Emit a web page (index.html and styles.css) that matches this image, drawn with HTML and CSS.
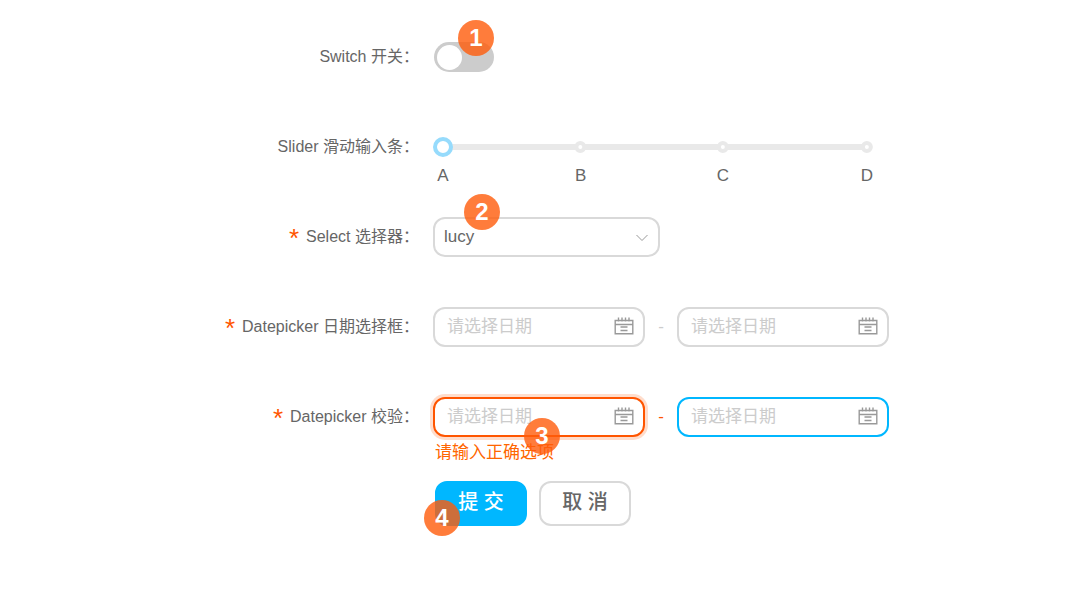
FILE: index.html
```html
<!DOCTYPE html>
<html lang="zh-CN">
<head>
  <meta charset="UTF-8" />
  <meta name="viewport" content="width=device-width, initial-scale=1" />
  <title>Form</title>
  <link rel="stylesheet" href="styles.css">
</head>
<body>
  <svg class="sprite" aria-hidden="true">
    <symbol id="icon-calendar" viewBox="0 0 20 18">
      <path d="M1.2 3.5h17.6v13.3H1.2zM1 7.5h18M4.5 .5v4M8 .5v4M11.5 .5v4M15 .5v4M6.5 10h7M6.5 13.5h7" />
    </symbol>
    <symbol id="icon-down" viewBox="0 0 12 8">
      <path d="M.5 1l5.5 5.5L11.5 1" />
    </symbol>
  </svg>

  <form class="form">
    <div class="form-item">
      <label class="form-label" for="switch">Switch 开关：</label>
      <div class="form-control">
        <div class="switch">
          <input type="checkbox" id="switch" role="switch" />
          <span class="badge badge-switch">1</span>
        </div>
      </div>
    </div>

    <div class="form-item">
      <label class="form-label" for="slider">Slider 滑动输入条：</label>
      <div class="form-control">
        <div class="slider">
          <div class="slider-rail">
            <span class="mark" style="left: 0%">A</span>
            <span class="mark mark-dot" style="left: 32.5%">B</span>
            <span class="mark mark-dot" style="left: 66%">C</span>
            <span class="mark mark-dot" style="left: 100%">D</span>
          </div>
          <input type="range" id="slider" min="0" max="100" value="0" />
        </div>
      </div>
    </div>

    <div class="form-item">
      <label class="form-label required" for="select">Select 选择器：</label>
      <div class="form-control">
        <div class="select">
          <select id="select">
            <option>lucy</option>
          </select>
          <svg class="icon-down"><use href="#icon-down" /></svg>
          <span class="badge badge-select">2</span>
        </div>
      </div>
    </div>

    <div class="form-item">
      <label class="form-label required" for="start">Datepicker 日期选择框：</label>
      <div class="form-control">
        <div class="date-range">
          <div class="date">
            <input type="text" id="start" placeholder="请选择日期" />
            <svg class="icon-calendar"><use href="#icon-calendar" /></svg>
          </div>
          <span class="split">-</span>
          <div class="date">
            <input type="text" aria-label="结束日期" placeholder="请选择日期" />
            <svg class="icon-calendar"><use href="#icon-calendar" /></svg>
          </div>
        </div>
      </div>
    </div>

    <div class="form-item form-item-error">
      <label class="form-label required" for="check">Datepicker 校验：</label>
      <div class="form-control">
        <div class="date-range">
          <div class="date date-error">
            <input type="text" id="check" placeholder="请选择日期" aria-describedby="check-error" />
            <svg class="icon-calendar"><use href="#icon-calendar" /></svg>
            <span class="badge badge-date">3</span>
          </div>
          <span class="split">-</span>
          <div class="date date-active">
            <input type="text" aria-label="结束日期" placeholder="请选择日期" />
            <svg class="icon-calendar"><use href="#icon-calendar" /></svg>
          </div>
        </div>
        <div class="error-text" id="check-error">请输入正确选项</div>
      </div>
    </div>

    <div class="form-item">
      <div class="form-control form-actions">
        <div class="submit">
          <button type="submit" class="btn btn-primary">提 交</button>
          <span class="badge badge-submit">4</span>
        </div>
        <button type="button" class="btn">取 消</button>
      </div>
    </div>
  </form>
</body>
</html>
```
FILE: styles.css
```css
*, *::before {
  box-sizing: border-box;
}

body {
  margin: 0;
  background: #fff;
  color: #666;
  font-family: "Liberation Sans", "Noto Sans CJK SC", sans-serif;
  font-size: 16px;
}

input, select, button {
  margin: 0;
  font: inherit;
  color: inherit;
  outline: none;
}

.sprite {
  position: absolute;
  width: 0;
  height: 0;
}

.form {
  padding: 37px 0 20px;
}

.form-item {
  display: grid;
  grid-template-columns: 39% 1fr;
  column-gap: 11px;
  min-height: 40px;
  margin-bottom: 50px;
}

.form-item-error {
  margin-bottom: 16px;
}

.form-label {
  height: 40px;
  padding-right: 3px;
  line-height: 40px;
  text-align: right;
}

.required::before {
  content: "*";
  display: inline-block;
  height: 40px;
  margin-right: 7px;
  color: #ff5500;
  font-size: 26px;
  line-height: 42px;
  vertical-align: top;
}

.form-control {
  grid-column: 2;
}

/* switch */
.switch {
  position: relative;
  width: 60px;
  height: 30px;
  margin: 5px 0 0 1px;
}

.switch input {
  appearance: none;
  display: flex;
  align-items: center;
  width: 60px;
  height: 30px;
  padding: 0 3px;
  border-radius: 15px;
  background: #ccc;
  cursor: pointer;
}

.switch input::before {
  content: "";
  width: 25px;
  height: 25px;
  border-radius: 50%;
  background: #fff;
}

.switch input:checked {
  justify-content: flex-end;
  background: #00b7ff;
}

/* slider */
.slider {
  position: relative;
  max-width: 444px;
  height: 40px;
}

.slider input {
  appearance: none;
  position: relative;
  display: block;
  width: 100%;
  height: 40px;
  background: transparent;
  cursor: pointer;
}

.slider input::-webkit-slider-thumb {
  appearance: none;
  box-sizing: border-box;
  width: 20px;
  height: 20px;
  border: 4px solid #96dbfc;
  border-radius: 50%;
  background: #fff;
}

.slider-rail {
  position: absolute;
  top: 17px;
  left: 10px;
  right: 10px;
  height: 6px;
  border-radius: 3px;
  background: #e9e9e9;
}

.mark {
  position: absolute;
  top: 19px;
  transform: translateX(-50%);
  font-size: 17px;
  line-height: 26px;
}

.mark-dot::before {
  content: "";
  position: absolute;
  top: -22px;
  left: 50%;
  width: 12px;
  height: 12px;
  margin-left: -6px;
  border: 4px solid #e9e9e9;
  border-radius: 50%;
  background: #fff;
}

/* select and date boxes */
.select {
  position: relative;
  max-width: 227px;
}

.select select,
.date input {
  appearance: none;
  display: block;
  width: 100%;
  height: 40px;
  border: 2px solid #d9d9d9;
  border-radius: 12px;
  background: #fff;
  font-size: 17px;
}

.select select {
  padding: 0 36px 2px 9px;
}

.icon-down {
  position: absolute;
  top: 17px;
  right: 12px;
  width: 12px;
  height: 8px;
  fill: none;
  stroke: #999;
  pointer-events: none;
}

.date-range {
  display: flex;
  align-items: center;
  max-width: 456px;
}

.date {
  position: relative;
  flex: 1;
}

.date input {
  padding: 0 40px 0 12px;
}

.date input::placeholder {
  color: #ccc;
}

.icon-calendar {
  position: absolute;
  top: 10px;
  right: 11px;
  width: 20px;
  height: 18px;
  fill: none;
  stroke: #999;
  stroke-width: 1.4;
  pointer-events: none;
}

.split {
  width: 32px;
  color: #ccc;
  font-size: 17px;
  text-align: center;
}

.date-error input {
  border-color: #ff5500;
  box-shadow: 0 0 0 3px #ffddcc;
}

.date-error + .split {
  color: #ff5500;
}

.date-active input {
  border-color: #00b7ff;
}

.error-text {
  margin-top: 4px;
  padding-left: 2px;
  color: #ff6600;
  font-size: 17px;
  line-height: 24px;
}

/* buttons */
.form-actions {
  display: flex;
  gap: 12px;
  padding-left: 2px;
}

.submit {
  position: relative;
}

.btn {
  display: block;
  width: 92px;
  height: 45px;
  padding: 0 0 6px;
  border: 2px solid #d9d9d9;
  border-radius: 12px;
  background: #fff;
  font-size: 20px;
  font-weight: 500;
  cursor: pointer;
}

.btn-primary {
  border-color: #00b7ff;
  background: #00b7ff;
  color: #fff;
}

/* numbered badges */
.badge {
  position: absolute;
  width: 36px;
  height: 36px;
  border-radius: 50%;
  background: rgba(255, 91, 10, 0.8);
  color: #fff;
  font-size: 24px;
  font-weight: bold;
  line-height: 36px;
  text-align: center;
  pointer-events: none;
}

.badge-switch {
  top: -22px;
  left: 24px;
}

.badge-select {
  top: -23px;
  left: 31px;
}

.badge-date {
  top: 21px;
  left: 91px;
}

.badge-submit {
  top: 19px;
  left: -11px;
}
```
